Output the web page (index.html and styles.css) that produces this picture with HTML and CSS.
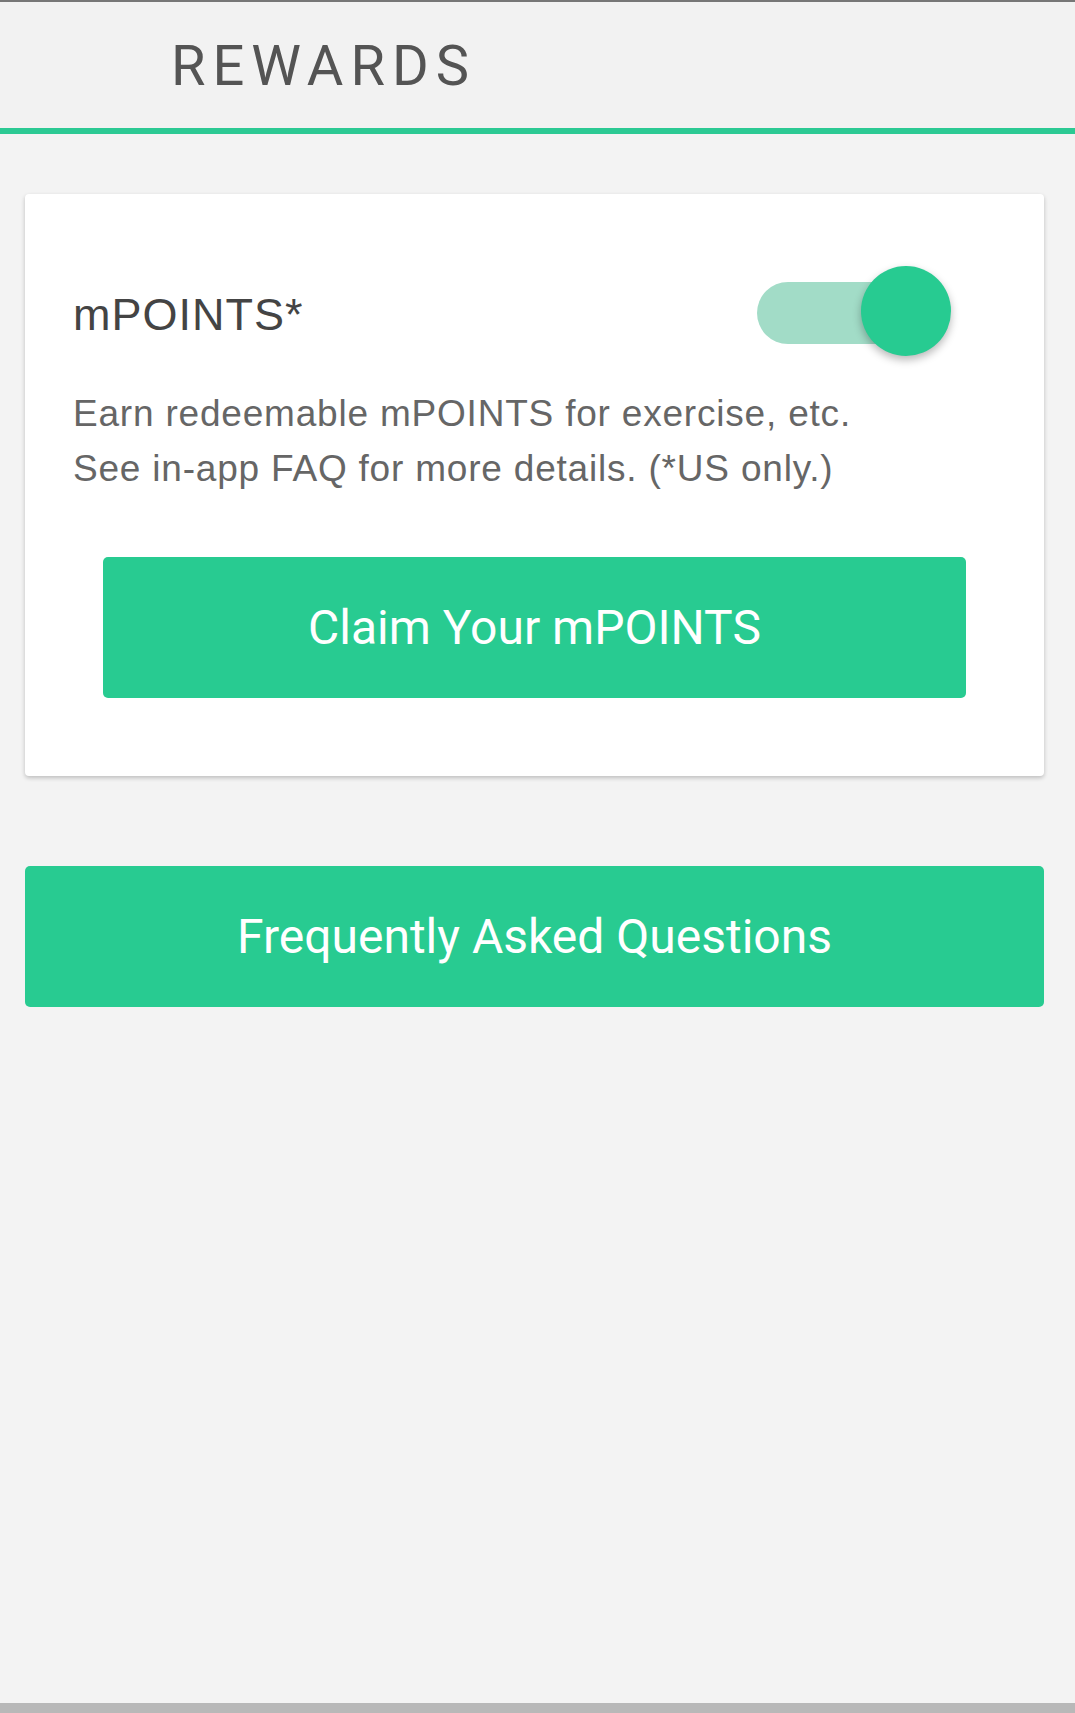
FILE: index.html
```html
<!DOCTYPE html>
<html>
<head>
<meta charset="utf-8">
<link rel="stylesheet" href="styles.css">
</head>
<body>
<div class="topline"></div>
<header class="header">
  <h1 class="header-title">REWARDS</h1>
</header>
<main class="content">
  <section class="card">
    <div class="card-head">
      <h2 class="card-title">mPOINTS*</h2>
      <div class="toggle">
        <div class="toggle-track"></div>
        <div class="toggle-thumb"></div>
      </div>
    </div>
    <p class="card-desc">Earn redeemable mPOINTS for exercise, etc.<br>See in-app FAQ for more details. (*US only.)</p>
    <button class="btn btn-claim">Claim Your mPOINTS</button>
  </section>
  <button class="btn btn-faq">Frequently Asked Questions</button>
</main>
<div class="bottombar"></div>
</body>
</html>
```
FILE: styles.css
```css
* { box-sizing: border-box; }
html, body {
  margin: 0;
  padding: 0;
  height: 100%;
}
body {
  background: #f3f3f3;
  font-family: "Liberation Sans", Arial, sans-serif;
  display: flex;
  flex-direction: column;
  min-height: 1713px;
}
.topline {
  height: 2px;
  background: #777;
}
.header {
  height: 132px;
  background: #f2f2f2;
  border-bottom: 6px solid #2cc993;
  padding-left: 171px;
  display: flex;
  align-items: flex-start;
}
.header-title {
  margin: 32px 0 0 0;
  font-family: Roboto, sans-serif;
  font-weight: 400;
  font-size: 56px;
  line-height: 64px;
  letter-spacing: 7px;
  color: #545454;
}
.content {
  flex: 1;
  padding: 60px 31px 0 25px;
}
.card {
  background: #fff;
  border-radius: 4px;
  box-shadow: 0 2px 4px rgba(0,0,0,0.22);
  padding: 72px 93px 78px 48px;
}
.card-head {
  display: flex;
  justify-content: space-between;
  align-items: flex-start;
}
.card-title {
  margin: 22px 0 0 0;
  font-weight: 400;
  font-size: 45px;
  line-height: 54px;
  letter-spacing: 1px;
  color: #444;
}
.toggle {
  position: relative;
  width: 194px;
  height: 90px;
}
.toggle-track {
  position: absolute;
  left: 0;
  top: 16px;
  width: 170px;
  height: 62px;
  border-radius: 31px;
  background: #a2dcc7;
}
.toggle-thumb {
  position: absolute;
  right: 0;
  top: 0;
  width: 90px;
  height: 90px;
  border-radius: 50%;
  background: #27cb91;
  box-shadow: 0 4px 8px rgba(0,0,0,0.28);
}
.card-desc {
  margin: 30px 0 0 0;
  font-size: 37px;
  line-height: 55px;
  letter-spacing: 0.8px;
  color: #666;
}
.btn {
  display: block;
  border: none;
  border-radius: 5px;
  background: #28cb91;
  color: #fff;
  font-family: Roboto, sans-serif;
  font-size: 48px;
  height: 141px;
  padding: 0;
  cursor: pointer;
}
.btn-claim {
  width: 863px;
  margin: 61px 0 0 30px;
}
.btn-faq {
  width: 1019px;
  margin-top: 90px;
}
.bottombar {
  height: 10px;
  background: #b8b8b8;
}
```
